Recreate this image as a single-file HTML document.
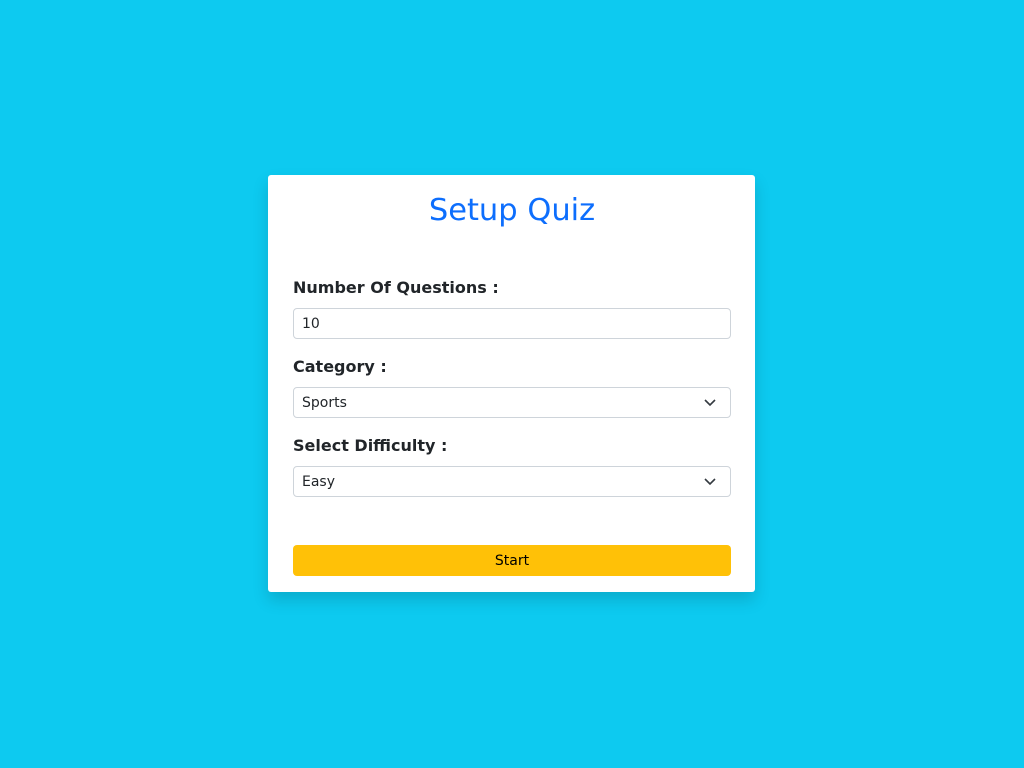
<!DOCTYPE html>
<html><head><style>
body{margin:0;background:#0dcaf0;font-family:"DejaVu Sans",sans-serif;width:1024px;height:768px;position:relative;overflow:hidden}
.card{position:absolute;left:268px;top:175px;width:487px;height:417px;background:#fff;border-radius:3px;box-shadow:0 8px 16px rgba(0,0,0,.15)}
h1{position:absolute;left:0;right:0;top:192px;margin:0;text-align:center;color:#0d6efd;font-weight:400;font-size:30.5px;line-height:38px}
.l{position:absolute;left:293px;font-weight:bold;font-size:16px;color:#212529;line-height:20px}
.f{position:absolute;left:293px;width:436px;height:29px;border:1px solid #ced4da;border-radius:4px;font-size:14px;line-height:31px;color:#212529;box-sizing:content-box}
.f span{margin-left:8px}
.f svg{position:absolute;right:14px;top:10px}
.b{position:absolute;left:293px;top:545px;width:438px;height:31px;background:#ffc107;border-radius:4px;text-align:center;line-height:32px;font-size:14px;color:#000}
</style></head><body>
<div class="card"></div>
<h1>Setup Quiz</h1>
<div class="l" style="top:278px">Number Of Questions :</div>
<div class="f" style="top:308px"><span>10</span></div>
<div class="l" style="top:357px">Category :</div>
<div class="f" style="top:387px"><span>Sports</span><svg width="12" height="9" viewBox="0 0 12 9"><path d="M1 2l5 5 5-5" fill="none" stroke="#343a40" stroke-width="1.6"/></svg></div>
<div class="l" style="top:436px">Select Difficulty :</div>
<div class="f" style="top:466px"><span>Easy</span><svg width="12" height="9" viewBox="0 0 12 9"><path d="M1 2l5 5 5-5" fill="none" stroke="#343a40" stroke-width="1.6"/></svg></div>
<div class="b">Start</div>
</body></html>
